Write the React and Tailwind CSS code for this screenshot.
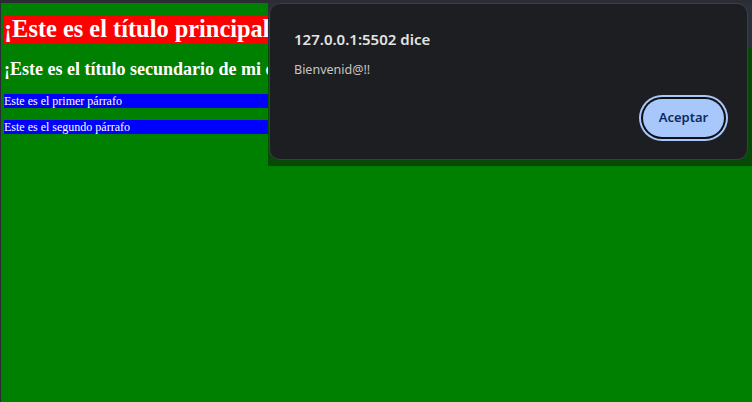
import React from "react";

export default function App() {
  return (
    <div className="relative h-[402px] w-[752px] overflow-hidden bg-[#008000] border-t-[3px] border-l border-[#2a2d34]">
      {/* Page content, text clipped where the alert covers it */}
      <div className="pl-[3px] pt-[12px] text-white font-['Liberation_Serif',serif]">
        <h1 className="bg-[#ff0000] text-[24.4px] leading-[28px] font-bold">
          <span className="block w-[265px] overflow-hidden whitespace-nowrap">¡Este es el título principal!</span>
        </h1>
        <h2 className="w-[265px] mt-[16px] mb-[14px] overflow-hidden whitespace-nowrap text-[18px] leading-[21px] font-bold">
          ¡Este es el título secundario de mi código!
        </h2>
        <p className="bg-[#0000ff] text-[12px] leading-[14px]">Este es el primer párrafo</p>
        <p className="mt-[12px] bg-[#0000ff] text-[12px] leading-[14px]">Este es el segundo párrafo</p>
      </div>

      {/* Dialog backdrop strip */}
      <div className="absolute left-[267px] top-[-3px] w-[485px] h-[166px] flex flex-col">
        <div className="h-[47px] bg-[#2c303a]" />
        <div className="flex-1 bg-[#064a06]" />
      </div>

      {/* Alert dialog */}
      <div className="absolute left-[268px] top-0 w-[479px] h-[157px] rounded-[11px] border border-[#3b3e45] bg-[#1d1e22] pl-[24px] pr-[23px] pt-[25px] pb-[22px] flex flex-col font-['Noto_Sans',sans-serif]">
        <div className="text-[15px] leading-[20px] font-semibold text-[#e3e3e3]">127.0.0.1:5502 dice</div>
        <div className="mt-[12px] text-[12.5px] leading-[18px] text-[#c4c7c5]">Bienvenid@!!</div>
        <div className="mt-auto flex justify-end">
          <button className="w-[81px] h-[38px] rounded-full bg-[#a8c7fa] text-[13px] font-semibold text-[#0b2b63] shadow-[0_0_0_2px_#0f1012,0_0_0_4px_#a8c7fa]">
            Aceptar
          </button>
        </div>
      </div>
    </div>
  );
}
